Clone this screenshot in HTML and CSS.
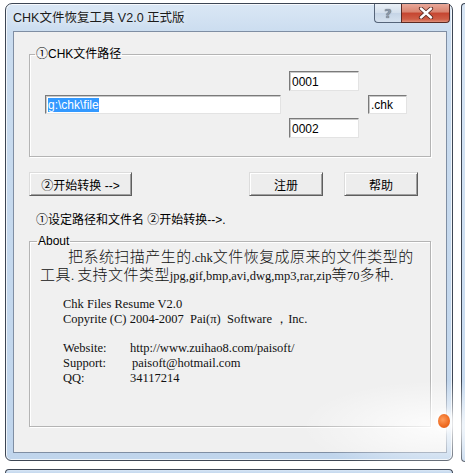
FILE: index.html
```html
<!DOCTYPE html>
<html>
<head>
<meta charset="utf-8">
<link rel="stylesheet" href="styles.css">
</head>
<body>
<div class="neighbor neighbor-right"></div>
<div class="neighbor neighbor-bottom"></div>
<div class="window">
  <div class="titlebar">
    <span class="title">CHK文件恢复工具 V2.0 正式版</span>
    <div class="caption-btns">
      <div class="cbtn cbtn-help">?</div>
      <div class="cbtn cbtn-close">
        <svg width="16" height="12" viewBox="0 0 16 12">
          <path d="M3 1.5 L13 10.5 M13 1.5 L3 10.5" stroke="#5a2a22" stroke-width="4.2" stroke-linecap="round"/>
          <path d="M3 1.5 L13 10.5 M13 1.5 L3 10.5" stroke="#ffffff" stroke-width="2.4" stroke-linecap="round"/>
        </svg>
      </div>
    </div>
  </div>
  <div class="client">
    <fieldset class="group path-group">
      <legend>①CHK文件路径</legend>
      <div class="path-row">
        <div class="field path"><span class="sel">g:\chk\file</span></div>
        <div class="num-col">
          <div class="field num">0001</div>
          <div class="field num">0002</div>
        </div>
        <div class="field ext">.chk</div>
      </div>
    </fieldset>
    <div class="btn-row">
      <div class="btn btn-start">②开始转换 --&gt;</div>
      <div class="btn btn-reg">注册</div>
      <div class="btn btn-help">帮助</div>
    </div>
    <p class="hint">①设定路径和文件名 ②开始转换--&gt;.</p>
    <fieldset class="group about">
      <legend>About</legend>
      <p class="desc">把系统扫描产生的<span class="lat">.chk</span>文件恢复成原来的文件类型的<br>工具<span class="lat">. </span>支持文件类型<span class="lat">jpg,gif,bmp,avi,dwg,mp3,rar,zip</span>等<span class="lat">70</span>多种<span class="lat">.</span></p>
      <div class="info">
        <div class="info-line">Chk Files Resume V2.0</div>
        <div class="info-line pre">Copyrite (C) 2004-2007  Pai(π)  Software ，Inc.</div>
        <div class="info-line blank"></div>
        <div class="info-grid">
          <span>Website:</span><span>http://www.zuihao8.com/paisoft/</span>
          <span>Support:</span><span class="shift">paisoft@hotmail.com</span>
          <span>QQ:</span><span>34117214</span>
        </div>
      </div>
    </fieldset>
  </div>
</div>
<div class="glow"></div>
<div class="dot"></div>
</body>
</html>
```
FILE: styles.css
```css
html, body {
  margin: 0;
  padding: 0;
}
body {
  width: 465px;
  height: 473px;
  position: relative;
  overflow: hidden;
  background: #ffffff;
  font-family: "Liberation Sans", "Noto Sans CJK SC", sans-serif;
  font-size: 12px;
  color: #000;
}

/* neighbouring windows on the desktop */
.neighbor {
  position: absolute;
  border: 1px solid #3d4654;
  background: linear-gradient(#d7e5f4, #c4d8ee);
}
.neighbor-right {
  left: 461px;
  top: 3px;
  width: 3px;
  height: 457px;
  border-right: none;
  border-radius: 6px 0 0 6px;
}
.neighbor-bottom {
  left: 5px;
  top: 469px;
  width: 446px;
  height: 3px;
  border-bottom: none;
  border-radius: 6px 6px 0 0;
}

.window {
  position: absolute;
  left: 5px;
  top: 3px;
  width: 434px;
  height: 449px;
  border: 1px solid #3d4654;
  border-radius: 7px 7px 6px 6px;
  background: linear-gradient(#dae7f5 0px, #cadcef 30px, #c0d5ec 100%);
  box-shadow: inset 0 0 0 1px rgba(255,255,255,0.75);
  padding: 0 5px 7px 7px;
  display: flex;
  flex-direction: column;
}

.titlebar {
  height: 27px;
  display: flex;
  align-items: flex-start;
  justify-content: space-between;
  margin-right: -3px;
}
.title {
  font-family: "Liberation Sans", "Noto Sans CJK SC", sans-serif;
  font-size: 12.5px;
  line-height: 16px;
  padding-top: 6px;
  color: #1b1b1b;
  text-shadow: 0 0 6px rgba(255,255,255,0.9);
}
.caption-btns {
  display: flex;
}
.cbtn {
  height: 18px;
  border: 1px solid #56657a;
  border-top: none;
  display: flex;
  align-items: center;
  justify-content: center;
}
.cbtn-help {
  width: 26px;
  border-right: none;
  border-radius: 0 0 0 4px;
  background: linear-gradient(#eaf0f7, #d3dfec 50%, #c5d4e6 51%, #d6e2ef);
  color: #8b97a6;
  font-family: "DejaVu Sans", sans-serif;
  font-weight: bold;
  font-size: 13px;
  text-shadow: 0 0 1px #40495a;
}
.cbtn-close {
  width: 47px;
  border-color: #5b2b24;
  border-radius: 0 0 4px 0;
  background: linear-gradient(#e9a899, #d8836f 45%, #c54530 50%, #cf5e46 85%, #e0917c);
}

.client {
  flex: 1;
  background: #f0f0f0;
  border: 1px solid #7f8ea3;
  display: flex;
  flex-direction: column;
  padding: 0 15px 25px 15px;
}

.group {
  margin: 0;
  border: 1px solid #b4b4b4;
  box-shadow: inset 1px 1px 0 #ffffff, 1px 1px 0 #ffffff;
  padding: 0;
  min-width: 0;
}
.group legend {
  margin-left: 5px;
  padding: 0 1px;
  line-height: 14px;
  font-size: 12px;
}

.path-group {
  margin-top: 15px;
  padding: 10px 0 18px 0;
}
.path-row {
  display: flex;
  align-items: center;
  padding-left: 15px;
}
.field {
  background: #ffffff;
  border-top: 1px solid #7a7a7a;
  border-left: 1px solid #7a7a7a;
  border-right: 1px solid #e3e3e3;
  border-bottom: 1px solid #e3e3e3;
  box-shadow: inset 1px 1px 0 #c8c8c8;
  box-sizing: border-box;
  font-size: 12px;
  line-height: 16px;
  padding: 1px 2px;
  white-space: nowrap;
}
.path {
  width: 236px;
  height: 19px;
}
.sel {
  background: #3399ff;
  color: #ffffff;
}
.num-col {
  margin-left: 8px;
  display: flex;
  flex-direction: column;
  gap: 27px;
}
.num {
  width: 70px;
  height: 20px;
  padding-top: 2px;
}
.ext {
  margin-left: 9px;
  width: 39px;
  height: 19px;
}

.btn-row {
  display: flex;
  margin-top: 15px;
}
.btn {
  height: 24px;
  box-sizing: border-box;
  display: flex;
  align-items: center;
  justify-content: center;
  background: #ededed;
  border-top: 1px solid #dcdcdc;
  border-left: 1px solid #dcdcdc;
  border-right: 1px solid #5e5e5e;
  border-bottom: 1px solid #5e5e5e;
  box-shadow: inset 1px 1px 0 #ffffff, inset -1px -1px 0 #a0a0a0;
  font-size: 12px;
}
.btn-start {
  width: 103px;
}
.btn-reg {
  width: 74px;
  margin-left: 117px;
}
.btn-help {
  width: 74px;
  margin-left: 21px;
}

.hint {
  margin: 17px 0 0 7px;
  line-height: 14px;
}

.about {
  flex: 1;
  margin-top: 7px;
  padding: 1px 0 0 0;
}
.about legend {
  margin-left: 7px;
}
.desc {
  margin: 0 0 0 10px;
  font-family: "Liberation Serif", "Noto Sans CJK SC", serif;
  font-size: 15px;
  font-weight: 300;
  line-height: 17px;
  text-indent: 28px;
  letter-spacing: 0.45px;
  color: #111;
  white-space: nowrap;
}
.lat {
  font-size: 12.5px;
  font-weight: 400;
  letter-spacing: 0;
}
.info {
  margin: 12px 0 0 33px;
  font-family: "Liberation Serif", serif;
  font-size: 12.5px;
  line-height: 14.8px;
  color: #111;
}
.info-line {
  height: 14.8px;
}
.pre {
  white-space: pre;
}
.info-grid {
  display: grid;
  grid-template-columns: 67px auto;
}
.shift {
  padding-left: 2px;
}

.glow {
  position: absolute;
  left: 300px;
  top: 380px;
  width: 165px;
  height: 93px;
  background: radial-gradient(ellipse at 85% 50%, rgba(255,255,255,0.85), rgba(255,255,255,0) 70%);
  pointer-events: none;
}
.dot {
  position: absolute;
  left: 438px;
  top: 414px;
  width: 12px;
  height: 14px;
  border-radius: 50%;
  background: radial-gradient(circle at 40% 40%, #ff9d5c, #ee6a20 60%, #d9561a);
  box-shadow: 0 0 6px 3px rgba(255,255,255,0.9);
}
```
